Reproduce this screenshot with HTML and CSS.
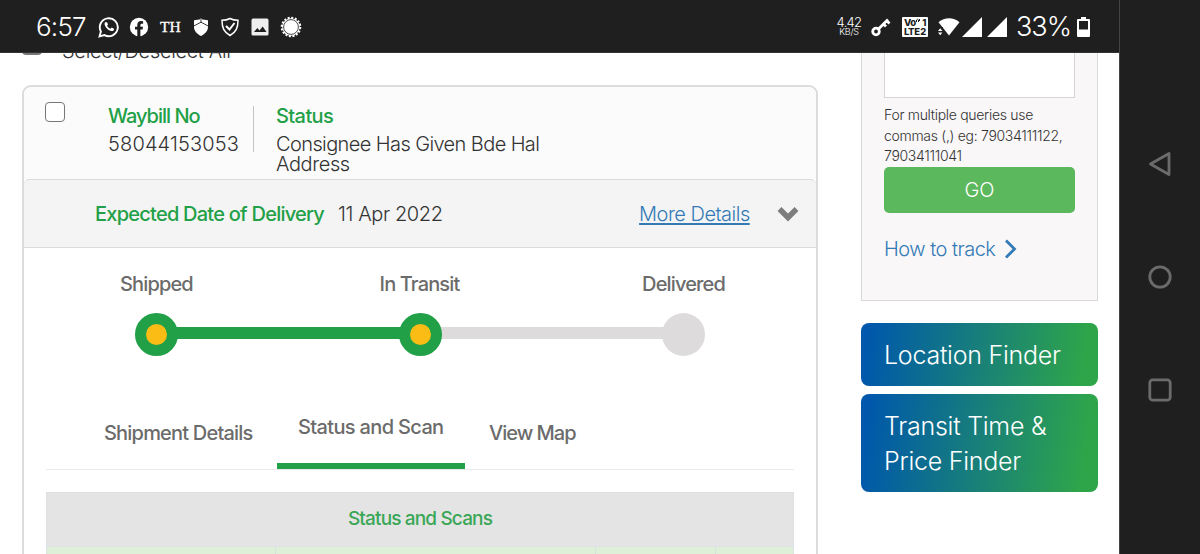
FILE: index.html
```
<!DOCTYPE html>
<html lang="en">
<head>
    <meta charset="UTF-8">
    <title>Track Shipment</title>
    <link rel="stylesheet" href="styles.css">
</head>
<body>
    <div class="screen">
        <header class="statusbar">
            <span class="clock">6:57</span>
            <div class="apps">
                <svg width="22" height="22" viewBox="0 0 22 22"><path d="M1.500 20.500l1.400-5a9 9 0 1 1 3.600 3.600z" fill="none" stroke="#fff" stroke-width="1.900"/><path d="M7.500 6c-1.500 1-1.300 3.300 1 6s5.600 4 7.200 2.200c.7-.9.400-1.400-.5-1.900l-1.600-.8-1.200 1.200c-1.500-.5-2.700-1.700-3.300-3l.9-1.200-.8-2.100z" fill="#fff"/></svg>
                <svg width="20" height="20" viewBox="0 0 20 20"><circle cx="10" cy="10" r="9.200" fill="#fff"/><path d="M8.300 20v-7.500H6V9.700h2.300V8c0-2.600 1.500-3.900 3.800-3.900l2 .2v2.400h-1.300c-1.100 0-1.400.7-1.400 1.400v1.600H14l-.4 2.800h-2.200V20z" fill="#1f1f1f"/></svg>
                <span class="th">TH</span>
                <svg width="16" height="20" viewBox="0 0 16 20"><path d="M8 1l1.500 1.500L15 3.300V10c0 4-3 7-7 9-4-2-7-5-7-9V3.300l5.500-.8z" fill="#fff"/><path d="M.8 9L8 5.200 15.200 9M8 1v4.500" fill="none" stroke="#1f1f1f" stroke-width=".9"/></svg>
                <svg width="20" height="20" viewBox="0 0 20 20"><path d="M10 1.500c2.500 1.300 5 1.800 8 1.800 0 7.500-1.800 11.500-8 15.200C3.800 14.800 2 10.800 2 3.300c3 0 5.500-.5 8-1.800z" fill="none" stroke="#fff" stroke-width="1.500"/><path d="M6 9l3.500 3.500L14.500 6" fill="none" stroke="#fff" stroke-width="2"/></svg>
                <svg width="18" height="18" viewBox="0 0 18 18"><rect x=".5" y=".5" width="17" height="17" rx="1.500" fill="#eee"/><path d="M3 14l3.300-4 2.200 2.500 3.200-4L15.500 14z" fill="#1f1f1f"/></svg>
                <svg width="22" height="22" viewBox="0 0 22 22"><circle cx="11" cy="11" r="9" fill="none" stroke="#fff" stroke-width="2.600" stroke-dasharray="2 1.530"/><circle cx="11" cy="11" r="8.700" fill="#fff"/><circle cx="11" cy="11" r="7.400" fill="none" stroke="#1f1f1f" stroke-width=".8"/></svg>
            </div>
            <div class="system">
                <div class="speed"><span>4.42</span><small>KB/S</small></div>
                <svg class="key" width="20" height="20" viewBox="0 0 20 20"><circle cx="5" cy="14.500" r="3.300" fill="none" stroke="#fff" stroke-width="2.800"/><path d="M7 12.500L17 2.500M12.500 7l2.500 2.500M15.500 3.500l3 3" fill="none" stroke="#fff" stroke-width="2.800"/></svg>
                <div class="volte">
                    <div><span>Vo</span><svg width="5" height="6" viewBox="0 0 5 6"><path d="M.5 4V2q1-1.500 2 0v2M3.500 3V1" fill="none" stroke="#1f1f1f"/></svg><span>1</span></div>
                    <div><span>LTE</span><span>2</span></div>
                </div>
                <svg class="wifi" width="22" height="20" viewBox="0 0 22 20"><path d="M.5 5.200C6.500-.2 15.500-.2 21.500 5.200L11 18.500z" fill="#fff"/><path d="M-1 10h6v9h-6z" fill="#1f1f1f"/><path d="M0 14l2.200-2.800L4.400 14zM0 15.500h4.400l-2.200 2.800z" fill="#fff"/></svg>
                <svg class="signal" width="20" height="20" viewBox="0 0 20 20"><path d="M20 0v20H0z" fill="#fff"/></svg>
                <svg class="signal" width="20" height="20" viewBox="0 0 20 20"><path d="M20 0v20H0z" fill="#fff"/></svg>
                <span class="percent">33%</span>
                <svg class="battery" width="13" height="20" viewBox="0 0 13 20"><path d="M4 0h5v2h3q1 0 1 1v16q0 1-1 1H1q-1 0-1-1V3q0-1 1-1h3z" fill="#fff"/><path d="M2 4h9v8.500H2z" fill="#1f1f1f"/></svg>
            </div>
        </header>

        <div class="page">
            <main class="results">
                <div class="select-all"><span class="box"></span><span class="select-text">Select/Deselect All</span></div>

                <section class="card">
                    <div class="summary">
                        <span class="box"></span>
                        <div class="waybill">
                            <h4 class="tight">Waybill No</h4>
                            <p class="number">58044153053</p>
                        </div>
                        <div class="divider"></div>
                        <div class="status">
                            <h4>Status</h4>
                            <p>Consignee Has Given Bde Hal</p>
                            <p class="second">Address</p>
                        </div>
                    </div>

                    <div class="expected">
                        <h4>Expected Date of Delivery</h4>
                        <span class="date">11 Apr 2022</span>
                        <a class="more" href="#">More Details</a>
                        <svg width="22" height="16" viewBox="0 0 22 16"><path d="M2.500 3l8.500 8.500L19.500 3" fill="none" stroke="#7d7d7d" stroke-width="5.500"/></svg>
                    </div>

                    <div class="labels">
                        <span>Shipped</span>
                        <span class="transit">In Transit</span>
                        <span>Delivered</span>
                    </div>
                    <div class="progress">
                        <span class="dot done"></span>
                        <span class="line done"></span>
                        <span class="dot done"></span>
                        <span class="line"></span>
                        <span class="dot"></span>
                    </div>

                    <nav class="tabs">
                        <span class="tab shipment">Shipment Details</span>
                        <span class="tab active">Status and Scan</span>
                        <span class="tab map">View Map</span>
                    </nav>

                    <div class="scans">
                        <div class="scans-title">Status and Scans</div>
                        <div class="scans-row"><span></span><span></span><span></span><span></span></div>
                    </div>
                </section>
            </main>

            <aside class="sidebar">
                <div class="query">
                    <div class="input"></div>
                    <p class="hint">For multiple queries use<br>commas (,) eg: 79034111122,<br>79034111041</p>
                    <button class="go">GO</button>
                    <a class="how" href="#"><span>How to track</span><svg width="14" height="20" viewBox="0 0 14 20"><path d="M2 1.500L10.500 10 2 18.500" fill="none" stroke="#337ab7" stroke-width="2.800"/></svg></a>
                </div>
                <a class="finder location">Location Finder</a>
                <a class="finder price">Transit Time &amp;<br>Price Finder</a>
            </aside>
        </div>
    </div>

    <div class="navbar">
        <svg width="24" height="26" viewBox="0 0 24 26"><path d="M21 2.500v21L2.500 13z" fill="none" stroke="#6b6b6b" stroke-width="2.800" stroke-linejoin="round"/></svg>
        <svg width="24" height="24" viewBox="0 0 24 24"><circle cx="12" cy="12" r="10.200" fill="none" stroke="#6b6b6b" stroke-width="2.800"/></svg>
        <svg width="24" height="24" viewBox="0 0 24 24"><rect x="1.800" y="1.800" width="20.400" height="20.400" rx="3" fill="none" stroke="#6b6b6b" stroke-width="2.800"/></svg>
    </div>
</body>
</html>
```

FILE: styles.css
```
* { box-sizing: border-box; }
body { margin: 0; width: 1200px; height: 554px; overflow: hidden; display: flex; background: #fff; color: #333; font: 300 20px/20px Inter, "Liberation Sans", sans-serif; white-space: nowrap; }
h4, p { margin: 0; }
h4 { color: #22a047; font-size: 20px; font-weight: 500; line-height: 24px; letter-spacing: -0.76px; }
svg { display: block; flex: none; }

.screen { width: 1119px; height: 554px; overflow: hidden; }

/* phone status bar */
.statusbar { height: 53px; padding-top: 1px; background: #1f1f1f; color: #fff; display: flex; align-items: center; border-bottom: 1px solid #333; }
.clock { width: 62px; margin-left: 36px; font-size: 26px; letter-spacing: -0.8px; }
.apps { display: flex; align-items: center; gap: 11px; }
.apps svg:nth-child(2) { margin-left: -2px; }
.th { width: 21px; font: 15.5px "Liberation Serif", serif; letter-spacing: 0; -webkit-text-stroke: 0.3px #fff; }
.th + svg { margin-left: 1px; }
.system { margin-left: auto; margin-right: 29px; display: flex; align-items: center; }
.speed { width: 24px; display: flex; flex-direction: column; align-items: center; font-size: 13px; line-height: 11px; letter-spacing: -0.7px; }
.speed small { font-size: 9px; line-height: 8px; letter-spacing: -0.2px; }
.key { margin-left: 10px; }
.volte { width: 26px; height: 20px; margin-left: 11px; padding: 1px 2px; border-radius: 1px; background: #fff; color: #1f1f1f; font-size: 9.5px; font-weight: 800; line-height: 9px; letter-spacing: -0.4px; }
.volte div { display: flex; justify-content: space-between; }
.wifi { margin-left: 10px; }
.signal { margin-left: 2px; }
.signal + .signal { margin-left: 5px; }
.percent { margin-left: 9px; font-size: 27px; letter-spacing: -1px; }
.battery { margin-left: 6px; }

.page { height: 501px; padding-left: 22px; display: flex; align-items: flex-start; overflow: hidden; }
.results { width: 796px; }
.select-all { height: 32px; display: flex; align-items: flex-start; }
.select-all .box { margin-top: -18px; border-width: 2px; }
.select-text { margin: -12px 0 0 20px; letter-spacing: -0.3px; }
.box { width: 20px; height: 20px; flex: none; border: 1px solid #777; border-radius: 4px; background: #fff; }

.card { height: 500px; border: 2px solid #dcdcdc; border-radius: 9px; background: #fff; }
.summary { height: 92px; padding: 15px 0 0 21px; display: flex; align-items: flex-start; background: #fbfbfb; border-radius: 8px 8px 0 0; }
.waybill { width: 145px; margin: 2px 0 0 43px; }
h4.tight { letter-spacing: -1px; }
.number { margin-top: 6px; letter-spacing: 0.15px; }
.divider { width: 1px; height: 46px; margin-top: 4px; background: #c4c4c4; }
.status { margin: 2px 0 0 22px; letter-spacing: -0.6px; }
.status h4 { letter-spacing: -0.6px; }
.status p { margin-top: 6px; }
.status .second { margin-top: 0; letter-spacing: -0.4px; }

.expected { height: 69px; padding-left: 71px; display: flex; align-items: center; background: #f4f4f4; border-top: 1px solid #dcdcdc; border-bottom: 1px solid #dcdcdc; border-radius: 5px 5px 0 0; }
.date { width: 301px; margin-left: 14px; letter-spacing: -0.4px; }
.more { width: 111px; margin-right: 27px; color: #337ab7; letter-spacing: -0.5px; text-decoration: underline; text-underline-offset: 2px; text-decoration-thickness: 1.5px; }

.labels { height: 65px; padding: 26px 91px 0 96px; display: flex; justify-content: space-between; color: #6b6b6b; font-weight: 450; letter-spacing: -0.85px; }
.labels .transit { margin-left: 4px; }
.progress { padding-left: 111px; display: flex; align-items: center; }
.dot { position: relative; width: 43px; height: 43px; border-radius: 50%; background: #dddbdc; }
.dot.done { border: 11.5px solid #22a047; background: #fbbc16; }
.line { width: 224.500px; height: 12px; margin: 0 -2px 3px; background: #dddbdc; }
.line.done { background: #22a047; }

.tabs { height: 70px; margin: 44px 22px 0; display: flex; color: #6b6b6b; border-bottom: 1px solid #e9e9e9; font-weight: 450; letter-spacing: -0.8px; }
.tab { padding-top: 23px; }
.shipment { width: 231px; padding-left: 58px; }
.tab.active { width: 188px; height: 69px; padding: 17px 0 0 21px; border-bottom: 6px solid #22a047; letter-spacing: -0.65px; }
.map { margin-left: 24px; letter-spacing: -1px; }

.scans { margin: 22px 22px 0; border: 1px solid #dde0e4; }
.scans-title { height: 53px; padding-top: 16px; background: #e4e4e4; color: #3aa757; text-align: center; font-size: 19px; font-weight: 450; letter-spacing: -0.85px; }
.scans-row { height: 40px; display: grid; grid-template-columns: 228px 320px 120px 1fr; border-top: 1px solid #dde0e4; background: #dff0d8; }
.scans-row span + span { border-left: 1px solid #d5e2da; }

.sidebar { width: 237px; margin-left: 43px; }
.query { height: 248px; padding: 0 22px; background: #f9f7f8; border: 1px solid #d9d9d9; border-top: 0; }
.input { height: 45px; background: #fff; border: 1px solid #d5d5d5; border-top: 0; }
.hint { padding-top: 7px; height: 69px; font-size: 14px; line-height: 20.5px; font-weight: 350; letter-spacing: -0.3px; }
.go { display: block; width: 191px; height: 46px; padding: 0; border: 0; border-radius: 5px; background: #5cb85c; color: #fff; font: 300 20px Inter, sans-serif; letter-spacing: 0; }
.how { margin-top: 26px; display: flex; align-items: center; gap: 9px; color: #337ab7; text-decoration: none; letter-spacing: -0.5px; }
.finder { display: block; padding-left: 23px; border-radius: 8px; background: linear-gradient(98deg, #0057ac 3%, #2fa54a 93%); color: #fff; font-size: 25px; line-height: 35px; letter-spacing: -0.25px; }
.location { height: 63px; margin-top: 22px; padding-top: 15px; }
.price { height: 98px; margin-top: 8px; padding-top: 15px; }

/* phone navigation */
.navbar { width: 81px; height: 554px; background: #1f1f1f; border-left: 1px solid #444; display: flex; flex-direction: column; align-items: center; gap: 89px; padding-top: 151px; }
.navbar svg + svg { margin-top: -1px; }
.navbar svg:last-child { margin-top: 0; }
```
